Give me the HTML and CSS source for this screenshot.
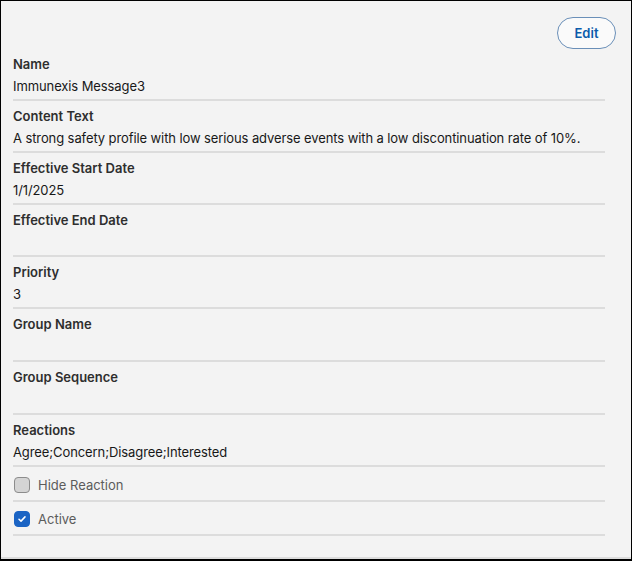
FILE: index.html
```html
<!DOCTYPE html>
<html>
<head>
<meta charset="utf-8">
<link rel="stylesheet" href="styles.css">
</head>
<body>
<div class="frame">
  <div class="toolbar">
    <button class="edit-btn">Edit</button>
  </div>
  <div class="fields">
    <div class="field">
      <div class="label">Name</div>
      <div class="value">Immunexis Message3</div>
    </div>
    <div class="field">
      <div class="label">Content Text</div>
      <div class="value">A strong safety profile with low serious adverse events with a low discontinuation rate of 10%.</div>
    </div>
    <div class="field">
      <div class="label">Effective Start Date</div>
      <div class="value">1/1/2025</div>
    </div>
    <div class="field">
      <div class="label">Effective End Date</div>
      <div class="value"></div>
    </div>
    <div class="field">
      <div class="label">Priority</div>
      <div class="value">3</div>
    </div>
    <div class="field tall">
      <div class="label">Group Name</div>
      <div class="value"></div>
    </div>
    <div class="field tall">
      <div class="label">Group Sequence</div>
      <div class="value"></div>
    </div>
    <div class="field">
      <div class="label">Reactions</div>
      <div class="value">Agree;Concern;Disagree;Interested</div>
    </div>
    <div class="check-row">
      <span class="box"></span>
      <span class="check-label">Hide Reaction</span>
    </div>
    <div class="check-row last">
      <span class="box checked">
        <svg viewBox="0 0 16 16" width="10" height="10"><path d="M3.2 8.4 L6.4 11.4 L12.8 4.6" fill="none" stroke="#fff" stroke-width="2.4" stroke-linecap="round" stroke-linejoin="round"/></svg>
      </span>
      <span class="check-label">Active</span>
    </div>
  </div>
</div>
</body>
</html>
```
FILE: styles.css
```css
html, body {
  margin: 0;
  padding: 0;
  background: #000;
}
.frame {
  box-sizing: border-box;
  width: 632px;
  height: 561px;
  border: 1px solid #000;
  border-bottom-width: 2px;
  background: #f3f3f3;
  font-family: Inter, "Liberation Sans", sans-serif;
  color: #181818;
  overflow: hidden;
  box-shadow: inset 0 -4px 0 -2px #dcdcdc;
}
.toolbar {
  display: flex;
  justify-content: flex-end;
  padding: 16px 15px 0 0;
  height: 32px;
}
.edit-btn {
  font-family: Inter, "Liberation Sans", sans-serif;
  font-size: 13px;
  font-weight: 600;
  color: #0b5cab;
  background: #fafafa;
  border: 1px solid #6a8fb8;
  border-radius: 16px;
  width: 59px;
  height: 32px;
  padding: 0;
}
.fields {
  padding: 0 26px 0 12px;
}
.field {
  height: 44px;
  border-bottom: 2px solid #dcdcdc;
  padding-top: 6px;
}
.field.tall {
  height: 45px;
}
.label {
  font-size: 13px;
  font-weight: 600;
  color: #2e2e2e;
  line-height: 18px;
}
.value {
  font-size: 13px;
  line-height: 18px;
  margin-top: 4px;
  letter-spacing: -0.1px;
}
.check-row {
  display: flex;
  align-items: center;
  height: 31px;
  padding-top: 2px;
  border-bottom: 2px solid #dcdcdc;
}
.check-row.last {
  height: 30px;
}
.box {
  width: 14px;
  height: 14px;
  border: 1px solid #8c8c8c;
  border-radius: 4px;
  background: #d4d4d4;
  display: flex;
  align-items: center;
  justify-content: center;
  margin-right: 8px;
  margin-left: 1px;
}
.box.checked {
  background: #1b64c4;
  border-color: #1b64c4;
}
.check-label {
  font-size: 13px;
  color: #5c5c5c;
}
```
